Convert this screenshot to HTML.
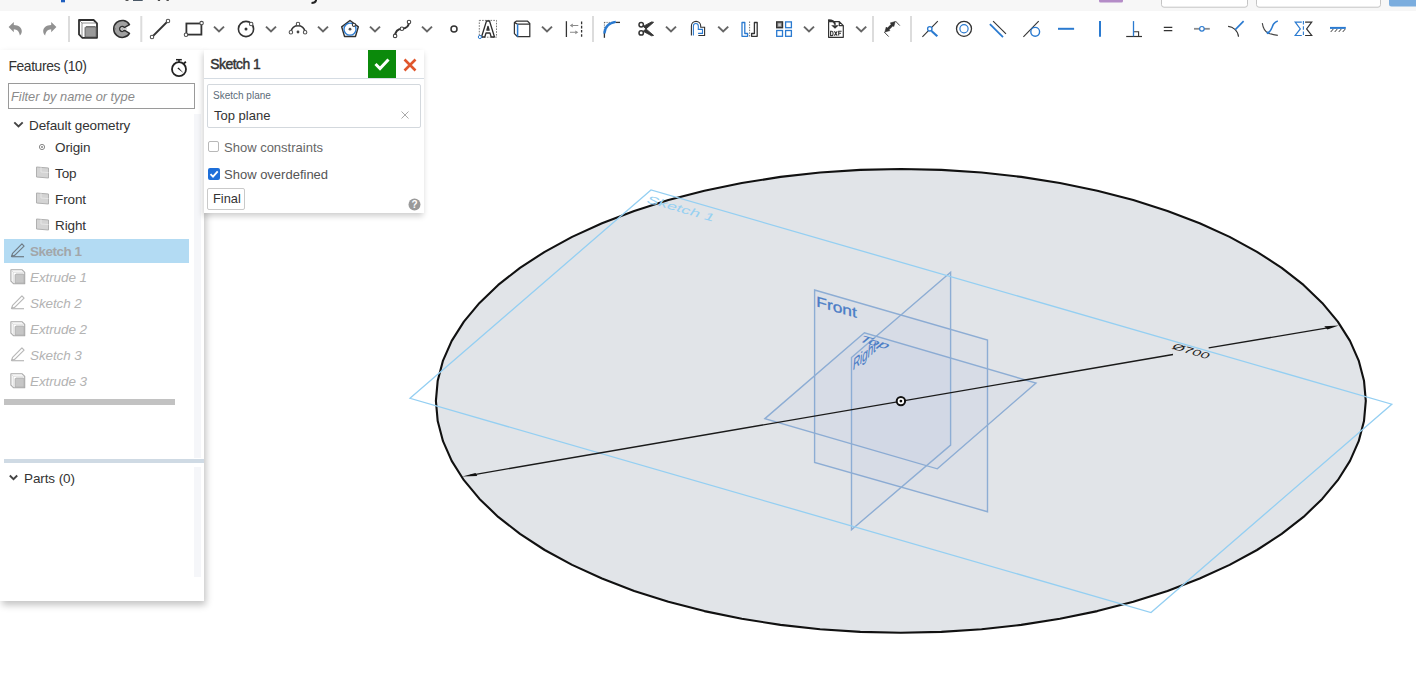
<!DOCTYPE html>
<html><head><meta charset="utf-8">
<style>
*{box-sizing:border-box;margin:0;padding:0}
html,body{width:1416px;height:699px;overflow:hidden;background:#fff;font-family:"Liberation Sans",sans-serif;color:#333}
.abs{position:absolute}
#topstrip{position:absolute;left:0;top:0;width:1416px;height:11px;background:#f5f5f5}
#toolbar{position:absolute;left:0;top:11px;width:1416px;height:37px;background:#fff}
#toolbar svg{position:absolute;top:0;left:0}
#panel{position:absolute;left:0;top:50px;width:204px;height:551px;background:#fff;box-shadow:2px 4px 7px rgba(0,0,0,.24)}
.t{position:absolute;white-space:nowrap;line-height:1}
#dlg{position:absolute;left:204px;top:50px;width:220px;height:163px;background:#fff;box-shadow:-1px 3px 6px rgba(0,0,0,.2)}
</style></head><body>
<div id="topstrip"></div>
<div id="toolbar"></div>
<!--TB--><svg class="abs" style="left:0;top:0" width="1416" height="49" viewBox="0 0 1416 49"><rect x="0" y="0" width="1416" height="10.6" fill="#f7f7f7"/>
<rect x="61" y="-1" width="4" height="3.3" fill="#1f5fbf"/>
<rect x="125.3" y="-1" width="3.4" height="1.8" rx="0.8" fill="#222"/>
<rect x="133" y="-1" width="9.7" height="2" fill="#4a5866"/>
<rect x="157.8" y="-1" width="2.3" height="1.8" fill="#222"/>
<rect x="166.5" y="-1" width="2.3" height="1.8" fill="#222"/>
<path d="M316,-1 L316,0.5 Q315.3,3 311.5,3" stroke="#222" stroke-width="2" fill="none"/>
<rect x="1099" y="-3" width="24" height="5.5" rx="1.5" fill="#b48cc7"/>
<rect x="1161.5" y="-4" width="86" height="11.2" rx="2.5" fill="#fff" stroke="#c4c4c4" stroke-width="1"/>
<rect x="1256.5" y="-4" width="124" height="11.2" rx="2.5" fill="#fff" stroke="#c4c4c4" stroke-width="1"/>
<rect x="1389" y="-4" width="30" height="10.5" rx="2.5" fill="#7badde"/>
<path d="M8.6,27.1 L13.8,21.9 L13.8,25.1 C18.6,25.1 21.8,28 21.8,31.3 C21.8,33.2 20.9,34.6 19.8,35.6 C19.6,32 17.2,29.2 13.8,29.2 L13.8,32.3 Z" fill="#919191"/>
<path d="M8.6,27.1 L13.8,21.9 L13.8,25.1 C18.6,25.1 21.8,28 21.8,31.3 C21.8,33.2 20.9,34.6 19.8,35.6 C19.6,32 17.2,29.2 13.8,29.2 L13.8,32.3 Z" fill="#919191" transform="translate(65,0) scale(-1,1)"/>
<rect x="68" y="16" width="2" height="26" fill="#dcdcdc"/>
<path d="M79,20 L93.6,20 L97,23.4 L97,37.8 L82.4,37.8 L79,34.4 Z" fill="#fff" stroke="#2e2e2e" stroke-width="1.8" stroke-linejoin="round"/>
<path d="M80,21 L82,23 L82,37 M82,23 L96,23" fill="none" stroke="#777" stroke-width="0.8"/>
<path d="M86.2,26.5 L95,26.5 L96.2,27.6 L96.2,37 L85,37 L85,27.7 Z" fill="#9a9a9a" stroke="#555" stroke-width="0.8"/>
<path d="M85,27.7 L86.2,26.5 L95,26.5 L96.2,27.6 Z" fill="#777"/>
<path d="M129.49,24.52 A8.5,8.5 0 1 0 129.49,33.28 L124.34,30.19 A2.5,2.5 0 1 1 124.34,27.61 Z" fill="#a0a0a0" stroke="#2e2e2e" stroke-width="1.5" stroke-linejoin="round"/>
<circle cx="122.4" cy="28.9" r="1.3" fill="#b0b0b0"/>
<rect x="123.4" y="28.099999999999998" width="3.4" height="1.6" fill="#c4c4c4"/>
<path d="M114.6,28.9 L115.8,28.9" stroke="#666" stroke-width="1"/>
<rect x="140.3" y="16" width="2" height="26" fill="#dcdcdc"/>
<line x1="152" y1="37" x2="168" y2="21" stroke="#333" stroke-width="1.8"/>
<circle cx="152" cy="37" r="1.75" fill="#fff" stroke="#505050" stroke-width="1.05"/><circle cx="168" cy="21" r="1.75" fill="#fff" stroke="#505050" stroke-width="1.05"/>
<rect x="186.4" y="23.5" width="15" height="11.1" fill="none" stroke="#333" stroke-width="1.8"/>
<circle cx="201.6" cy="23.1" r="1.75" fill="#fff" stroke="#505050" stroke-width="1.05"/><circle cx="186" cy="34.8" r="1.75" fill="#fff" stroke="#505050" stroke-width="1.05"/>
<polyline points="214,26.6 219,31.4 224,26.6" fill="none" stroke="#666" stroke-width="2"/>
<circle cx="246" cy="29" r="7.6" fill="none" stroke="#333" stroke-width="1.6"/>
<circle cx="246" cy="29" r="1.5" fill="#333"/>
<circle cx="251.2" cy="23.9" r="1.75" fill="#fff" stroke="#505050" stroke-width="1.05"/>
<polyline points="266,26.6 271,31.4 276,26.6" fill="none" stroke="#666" stroke-width="2"/>
<path d="M290.9,32 A7.2,7.6 0 0 1 305.1,32" fill="none" stroke="#333" stroke-width="1.6"/>
<circle cx="298" cy="32" r="1.4" fill="#444"/>
<circle cx="290.9" cy="32.2" r="1.75" fill="#fff" stroke="#505050" stroke-width="1.05"/><circle cx="305.1" cy="32.2" r="1.75" fill="#fff" stroke="#505050" stroke-width="1.05"/><circle cx="298" cy="24" r="1.75" fill="#fff" stroke="#505050" stroke-width="1.05"/>
<polyline points="318,26.6 323,31.4 328,26.6" fill="none" stroke="#666" stroke-width="2"/>
<polygon points="350,20.5 358.3,26.9 355.5,36.4 344.5,36.4 341.7,26.9" fill="none" stroke="#333" stroke-width="1.5" stroke-linejoin="round"/>
<circle cx="350" cy="29.2" r="6" fill="none" stroke="#2a7ad0" stroke-width="1.3"/>
<circle cx="350" cy="29.2" r="1.4" fill="#555"/>
<circle cx="353.9" cy="24.8" r="1.6" fill="#fff" stroke="#333" stroke-width="1.05"/>
<polyline points="370,26.6 375,31.4 380,26.6" fill="none" stroke="#666" stroke-width="2"/>
<path d="M395.1,35.9 C395.3,31 397.8,29.2 401.9,28.8 C406.2,28.4 409,26 409,21.95" fill="none" stroke="#333" stroke-width="1.9"/>
<circle cx="395.1" cy="35.9" r="1.75" fill="#fff" stroke="#444" stroke-width="1.1"/><circle cx="401.9" cy="28.8" r="1.75" fill="#fff" stroke="#444" stroke-width="1.1"/><circle cx="409" cy="21.95" r="1.75" fill="#fff" stroke="#444" stroke-width="1.1"/>
<polyline points="422,26.6 427,31.4 432,26.6" fill="none" stroke="#666" stroke-width="2"/>
<circle cx="454" cy="29" r="3" fill="#fff" stroke="#333" stroke-width="1.5"/>
<rect x="479.3" y="20.4" width="17.2" height="16.8" fill="none" stroke="#555" stroke-width="0.8" stroke-dasharray="1.6,1.2"/>
<path d="M481.5,37 L486.5,21 L489.5,21 L494.5,37 L491.2,37 L490,33 L486,33 L484.8,37 Z M486.9,30.2 L489.1,30.2 L488,26.3 Z" fill="#fff" stroke="#2e2e2e" stroke-width="1.3" stroke-linejoin="round"/>
<circle cx="479.9" cy="37" r="1.6" fill="#fff" stroke="#2a7ad0" stroke-width="1"/>
<path d="M514.4,22.4 L516.2,21.2 L527.6,21.2 L529.8,23.4 L529.8,36.7 L517.6,36.7 L514.4,33.6 Z M517.6,24.2 L529.8,24.2 M514.4,22.4 L517.6,24.2" fill="none" stroke="#333" stroke-width="1.25" stroke-linejoin="round"/>
<line x1="517.6" y1="24.2" x2="517.6" y2="36.7" stroke="#2a7ad0" stroke-width="1.5"/>
<polyline points="542,26.6 547,31.4 552,26.6" fill="none" stroke="#666" stroke-width="2"/>
<line x1="566.4" y1="21.2" x2="566.4" y2="37" stroke="#333" stroke-width="1.3"/>
<line x1="581.6" y1="21.6" x2="581.6" y2="37" stroke="#333" stroke-width="1.3" stroke-dasharray="2.6,1.6"/>
<path d="M572.6,25.5 L578.3,25.5 M570,32.3 L575.6,32.3" fill="none" stroke="#8a8a8a" stroke-width="1.1"/>
<path d="M569.8,25.5 L572.8,23.6 L572.8,27.4 Z M578.3,32.3 L575.3,30.4 L575.3,34.2 Z" fill="#8a8a8a"/>
<rect x="592" y="16" width="2" height="26" fill="#dcdcdc"/>
<path d="M604.4,22.4 L604.4,33 M604.4,22.4 L615.5,22.4" fill="none" stroke="#333" stroke-width="0.9" stroke-dasharray="0.9,1.3"/>
<line x1="604.4" y1="33" x2="604.4" y2="37.8" stroke="#333" stroke-width="1.3"/>
<line x1="615.5" y1="22.4" x2="620" y2="22.4" stroke="#333" stroke-width="1.3"/>
<path d="M604.4,33.5 C604.8,27 609,22.8 615.8,21.9" fill="none" stroke="#2a7ad0" stroke-width="2.4"/>
<circle cx="641.2" cy="24.8" r="2.2" fill="none" stroke="#333" stroke-width="1.5"/>
<circle cx="641.2" cy="32.9" r="2.2" fill="none" stroke="#333" stroke-width="1.5"/>
<path d="M643.2,26.4 L646,28.9 L653.6,22.3 L651.6,21.9 Z M643.2,31.3 L646,28.9 L653.6,35.4 L651.6,35.8 Z" fill="#333" stroke="#333" stroke-width="0.9" stroke-linejoin="round"/>
<polyline points="666,26.6 671,31.4 676,26.6" fill="none" stroke="#666" stroke-width="2"/>
<path d="M691.4,35.5 L691.4,26 A4.65,4.65 0 0 1 700.7,26 L700.7,27.2 L704.6,27.2 L704.6,35.5 L698.3,35.5" fill="none" stroke="#333" stroke-width="1.1"/>
<path d="M693.4,35.5 L693.4,26 A2.45,2.45 0 0 1 698.3,26 L698.3,29.4 L702.5,29.4 L702.5,33.4 L698.1,33.4" fill="none" stroke="#2a7ad0" stroke-width="1.1"/>
<polyline points="718.2,26.6 723.2,31.4 728.2,26.6" fill="none" stroke="#666" stroke-width="2"/>
<path d="M742,22.5 L744.8,22.5 L744.8,33.5 L747.6,33.5 L747.6,36.3 L742,36.3 Z" fill="none" stroke="#2a7ad0" stroke-width="1.3" stroke-linejoin="round"/>
<path d="M757.2,22.5 L754.4,22.5 L754.4,33.5 L751.6,33.5 L751.6,36.3 L757.2,36.3 Z" fill="none" stroke="#333" stroke-width="1.3" stroke-linejoin="round"/>
<line x1="749.6" y1="21.5" x2="749.6" y2="37" stroke="#555" stroke-width="0.8" stroke-dasharray="1.5,1.2"/>
<rect x="776.7" y="21.9" width="5.8" height="5.8" fill="#888" stroke="#333" stroke-width="1.4"/>
<rect x="778.3" y="23.5" width="2.6" height="2.6" fill="#ccc"/>
<rect x="785.6" y="21.9" width="5.8" height="5.8" fill="none" stroke="#2a7ad0" stroke-width="1.3"/>
<rect x="776.7" y="30.5" width="5.8" height="5.8" fill="none" stroke="#2a7ad0" stroke-width="1.3"/>
<rect x="785.6" y="30.5" width="5.8" height="5.8" fill="none" stroke="#2a7ad0" stroke-width="1.3"/>
<polyline points="804,26.6 809,31.4 814,26.6" fill="none" stroke="#666" stroke-width="2"/>
<path d="M828.6,21.6 L839.3,21.6 L843.3,25.6 L843.3,37.3 L828.6,37.3 Z M839.3,21.6 L839.3,25.6 L843.3,25.6" fill="#fff" stroke="#333" stroke-width="1.2" stroke-linejoin="round"/>
<path d="M828,20.4 C831.5,20.2 835,21 835,24.8" fill="none" stroke="#333" stroke-width="2"/>
<path d="M831.2,25.2 L838.8,25.2 L835,28.8 Z" fill="#333"/>
<path d="M830.6,31.2 L830.6,35.6 L831.8,35.6 Q833.1,35.6 833.1,33.4 Q833.1,31.2 831.8,31.2 Z M834.4,31.2 L837.2,35.6 M837.2,31.2 L834.4,35.6 M841.6,31.2 L838.7,31.2 L838.7,35.6 M838.7,33.3 L841,33.3" fill="none" stroke="#333" stroke-width="1.1"/>
<polyline points="856.2,26.6 861.2,31.4 866.2,26.6" fill="none" stroke="#666" stroke-width="2"/>
<rect x="872" y="16" width="2" height="26" fill="#dcdcdc"/>
<path d="M887.6,29.4 L892.6,24.4" stroke="#333" stroke-width="2.8"/>
<path d="M895.2,21.6 L890.2,23.0 L893.8,26.6 Z M884.9,32.0 L886.3,27.0 L889.9,30.6 Z" fill="#333" stroke="#333" stroke-width="0.6" stroke-linejoin="round"/>
<path d="M895.4,21 L899.8,25.6 M884.2,32 L888.7,36.6" stroke="#333" stroke-width="0.9"/>
<rect x="910" y="16" width="2" height="26" fill="#dcdcdc"/>
<line x1="922.4" y1="36.8" x2="937.8" y2="21.1" stroke="#333" stroke-width="1.1"/>
<line x1="931.5" y1="31" x2="937.3" y2="36.3" stroke="#2a7ad0" stroke-width="2.2"/>
<circle cx="929.8" cy="28.8" r="2.2" fill="#fff" stroke="#2a7ad0" stroke-width="1.3"/>
<circle cx="964" cy="28.8" r="7.5" fill="none" stroke="#333" stroke-width="1.3"/>
<circle cx="964" cy="28.8" r="4.1" fill="none" stroke="#2a7ad0" stroke-width="1.2"/>
<line x1="993.1" y1="21.1" x2="1006" y2="33.8" stroke="#333" stroke-width="1.1"/>
<line x1="989.9" y1="24.2" x2="1003" y2="37.2" stroke="#2a7ad0" stroke-width="1.8"/>
<line x1="1023.4" y1="36.8" x2="1038.7" y2="21.1" stroke="#333" stroke-width="1.1"/>
<circle cx="1035.2" cy="31.8" r="4.4" fill="none" stroke="#2a7ad0" stroke-width="1.4"/>
<line x1="1058" y1="28.8" x2="1074.1" y2="28.8" stroke="#2a7ad0" stroke-width="2"/>
<line x1="1100" y1="20.9" x2="1100" y2="36.8" stroke="#2a7ad0" stroke-width="2"/>
<path d="M1133.6,31.7 L1138.6,31.7 L1138.6,36.5" fill="none" stroke="#333" stroke-width="1.1"/>
<line x1="1126.2" y1="36.5" x2="1142" y2="36.5" stroke="#333" stroke-width="1.2"/>
<line x1="1133.5" y1="21.1" x2="1133.5" y2="36.3" stroke="#2a7ad0" stroke-width="1.3"/>
<path d="M1163.8,27.4 L1172.3,27.4 M1163.8,30.6 L1172.3,30.6" stroke="#333" stroke-width="1.3"/>
<line x1="1194" y1="28.8" x2="1209.8" y2="28.8" stroke="#8c8c8c" stroke-width="1.8"/>
<circle cx="1201.9" cy="28.8" r="2.3" fill="#fff" stroke="#2a7ad0" stroke-width="1.2"/>
<path d="M1228.1,26.4 C1233,26.8 1238,30.5 1238.5,36.8" fill="none" stroke="#333" stroke-width="1.1"/>
<line x1="1235.3" y1="29.6" x2="1243.6" y2="21.1" stroke="#2a7ad0" stroke-width="1.6"/>
<path d="M1262.3,23.2 C1263,28 1265,31.5 1268,32.9 C1271,34.3 1275,35 1277.8,35.4" fill="none" stroke="#444" stroke-width="1.1"/>
<path d="M1268.2,32.8 C1271.8,30.8 1271.8,26.5 1273.6,24 C1274.8,22.4 1276.2,21.5 1277.8,21.1" fill="none" stroke="#2a7ad0" stroke-width="1.5"/>
<circle cx="1267.9" cy="32.8" r="1.4" fill="#2a7ad0"/>
<path d="M1301.8,22.2 L1295.2,22.2 L1300.3,28.9 L1295.2,35.5 L1301.8,35.5" fill="none" stroke="#2a7ad0" stroke-width="1.2"/>
<path d="M1305.1,22.2 L1311.7,22.2 L1306.6,28.9 L1311.7,35.5 L1305.1,35.5" fill="none" stroke="#333" stroke-width="1.2"/>
<line x1="1303.4" y1="21.1" x2="1303.4" y2="36.6" stroke="#2a7ad0" stroke-width="1.1" stroke-dasharray="3.4,1.8"/>
<line x1="1330" y1="27.9" x2="1345.8" y2="27.9" stroke="#2a7ad0" stroke-width="2"/>
<path d="M1330.8,31.9 L1333.2,29.1 M1334.8,31.9 L1337.2,29.1 M1338.8,31.9 L1341.2,29.1 M1342.8,31.9 L1345.2,29.1" stroke="#333" stroke-width="1"/></svg><!--/TB-->

<svg class="abs" style="left:0;top:0" width="1416" height="699" viewBox="0 0 1416 699">
  <polygon points="1365.8,400.9 1364.0,380.7 1358.7,360.6 1350.0,340.9 1337.8,321.6 1322.2,302.9 1303.5,284.9 1281.7,267.9 1257.0,251.8 1229.6,236.9 1199.7,223.3 1167.5,210.9 1133.3,200.1 1097.3,190.7 1059.9,183.0 1021.2,176.9 981.6,172.5 941.4,169.9 900.9,169.0 860.3,169.9 820.1,172.5 780.5,176.9 741.8,183.0 704.4,190.7 668.4,200.1 634.2,210.9 602.0,223.3 572.1,236.9 544.7,251.8 520.0,267.9 498.2,284.9 479.5,302.9 463.9,321.6 451.7,340.9 443.0,360.6 437.7,380.7 435.9,400.9 437.7,421.1 443.0,441.2 451.7,460.9 463.9,480.2 479.5,498.9 498.2,516.9 520.0,533.9 544.7,550.0 572.1,564.9 602.0,578.5 634.2,590.9 668.4,601.7 704.4,611.1 741.8,618.8 780.5,624.9 820.1,629.3 860.3,631.9 900.8,632.8 941.4,631.9 981.6,629.3 1021.2,624.9 1059.9,618.8 1097.3,611.1 1133.3,601.7 1167.5,590.9 1199.7,578.5 1229.6,564.9 1257.0,550.0 1281.7,533.9 1303.5,516.9 1322.2,498.9 1337.8,480.2 1350.0,460.9 1358.7,441.2 1364.0,421.1" fill="#e1e4e8" stroke="#111" stroke-width="2.1" stroke-linejoin="round"/>
  <g fill="rgba(110,150,210,0.045)" stroke="#8dadd4" stroke-width="1.4">
    <polygon points="814.6,290 987.5,340.1 987.5,511.7 814.6,462.4"/>
    <polygon points="764.9,418.6 864.4,332.8 1036,383 937.3,468.8"/>
    <polygon points="851.5,357.5 950.6,272.3 950.6,445.1 851.5,529.8"/>
  </g>
  <g fill="#4a7cc6" stroke="#4a7cc6" stroke-width="0.3" font-family="Liberation Sans" font-size="14.5">
    <text transform="matrix(1.196,0.3457,0,1,816.3,306.2)">Front</text>
    <text font-size="13" stroke-width="0.15" transform="matrix(0.765,-0.644,-0.12,1.32,852.4,370.8)">Right</text>
    <text font-size="12" stroke-width="0.12" transform="matrix(1.485,0.429,-0.7567,0.654,857.5,340.9)">Top</text>
  </g>
  <polygon points="410,398.3 651,190 1391.8,404.2 1151,612.5" fill="none" stroke="#94cff2" stroke-width="1.3"/>
  <text fill="#96d0f2" font-family="Liberation Sans" font-size="12" transform="matrix(1.43,0.415,-0.51,0.79,645.5,202.2)">Sketch 1</text>
  <g stroke="#1a1a1a" stroke-width="1.3" fill="none">
    <line x1="470" y1="475.3" x2="1173" y2="354.5"/>
    <line x1="1208.7" y1="347.9" x2="1332" y2="327.1"/>
  </g>
  <polygon points="462.3,476.5 475.5,473 477.3,476.1" fill="#111"/>
  <polygon points="1338.8,325.5 1324.3,326.2 1327.4,329.4" fill="#111"/>
  <text fill="#222" font-family="Liberation Sans" font-size="12" transform="matrix(1.24,0.36,-0.49,0.65,1171,348.5)">Ø700</text>
  <circle cx="900.9" cy="401.1" r="4.2" fill="#fff" stroke="#111" stroke-width="2"/>
  <circle cx="900.9" cy="401.1" r="1.4" fill="#111"/>
</svg>

<div id="panel">
  <div class="abs" style="left:4px;top:189px;width:185px;height:24px;background:#b3dbf3"></div>
  <div class="t" style="left:8.4px;top:9.6px;font-size:13.9px;letter-spacing:-0.4px;color:#333">Features (10)</div>
  <svg class="abs" style="left:169px;top:8px" width="20" height="20" viewBox="0 0 20 20">
    <circle cx="10" cy="11.2" r="7" fill="none" stroke="#222" stroke-width="1.8"/>
    <line x1="7" y1="1.7" x2="12.8" y2="1.7" stroke="#222" stroke-width="1.5"/>
    <line x1="10" y1="1.7" x2="10" y2="4.2" stroke="#222" stroke-width="1.6"/>
    <line x1="14.8" y1="5.5" x2="16.9" y2="3.8" stroke="#222" stroke-width="1.8"/>
    <path d="M8.4,10.4 L9.6,9.4 L14.5,15.1 Z" fill="#222"/>
  </svg>
  <div class="abs" style="left:8px;top:33px;width:187px;height:26px;border:1px solid #9a9a9a;background:#fff"></div>
  <div class="t" style="left:11px;top:41px;font-size:12.8px;font-style:italic;color:#8a8a8a">Filter by name or type</div>
  <svg class="abs" style="left:12px;top:69px" width="14" height="12" viewBox="0 0 14 12"><polyline points="2.3,3.3 6.5,7.5 10.7,3.3" fill="none" stroke="#444" stroke-width="1.9"/></svg>
  <div class="t" style="left:29px;top:68.5px;font-size:13.5px;letter-spacing:-0.1px;color:#333">Default geometry</div>
  <svg class="abs" style="left:38px;top:93px" width="8" height="8" viewBox="0 0 8 8"><circle cx="4" cy="4" r="2.6" fill="#fff" stroke="#888" stroke-width="1"/><circle cx="4" cy="4" r="1" fill="#888"/></svg>
  <div class="t" style="left:55px;top:90.5px;font-size:13.5px;letter-spacing:-0.1px;color:#333">Origin</div>
  <svg class="abs" style="left:35px;top:116px" width="15" height="13" viewBox="0 0 15 13"><path d="M1.5,1 L13.5,2 L13.5,12 L1.5,11 Z" fill="#d4d4d4" stroke="#b0b0b0" stroke-width="1"/><path d="M6,1.4 L6,6 L13.5,6.6" fill="none" stroke="#e6e6e6" stroke-width="1"/></svg><svg class="abs" style="left:35px;top:142px" width="15" height="13" viewBox="0 0 15 13"><path d="M1.5,1 L13.5,2 L13.5,12 L1.5,11 Z" fill="#d4d4d4" stroke="#b0b0b0" stroke-width="1"/><path d="M6,1.4 L6,6 L13.5,6.6" fill="none" stroke="#e6e6e6" stroke-width="1"/></svg><svg class="abs" style="left:35px;top:168px" width="15" height="13" viewBox="0 0 15 13"><path d="M1.5,1 L13.5,2 L13.5,12 L1.5,11 Z" fill="#d4d4d4" stroke="#b0b0b0" stroke-width="1"/><path d="M6,1.4 L6,6 L13.5,6.6" fill="none" stroke="#e6e6e6" stroke-width="1"/></svg><svg class="abs" style="left:10px;top:193px" width="16" height="15" viewBox="0 0 16 15"><path d="M1.5,13.5 L2.56,10.32 L11.94,0.94 L14.06,3.06 L4.68,12.44 Z" fill="none" stroke="#6f7b85" stroke-width="1.2" stroke-linejoin="round"/><path d="M1.5,13.5 L2.2,11.4 L3.6,12.8 Z" fill="#6f7b85"/><line x1="1.5" y1="13.7" x2="14" y2="13.7" stroke="#6f7b85" stroke-width="1.2"/></svg><svg class="abs" style="left:10px;top:219px" width="16" height="16" viewBox="0 0 16 16"><path d="M0.9,0.8 L12.2,0.8 L14.7,3.3 L14.7,14.7 L3.4,14.7 L0.9,12.2 Z" fill="#fff" stroke="#a8a8a8" stroke-width="1.1" stroke-linejoin="round"/><path d="M1.6,1.5 L3.2,3.2 L3.2,14 M3.2,3.2 L14,3.2" fill="none" stroke="#d4d4d4" stroke-width="0.8"/><path d="M5.9,5 L13.6,5 L14.2,5.6 L14.2,14.2 L5.1,14.2 L5.1,5.8 Z" fill="#c6c6c6" stroke="#a8a8a8" stroke-width="0.8"/></svg><svg class="abs" style="left:10px;top:245px" width="16" height="15" viewBox="0 0 16 15"><path d="M1.5,13.5 L2.56,10.32 L11.94,0.94 L14.06,3.06 L4.68,12.44 Z" fill="none" stroke="#b8b8b8" stroke-width="1.2" stroke-linejoin="round"/><path d="M1.5,13.5 L2.2,11.4 L3.6,12.8 Z" fill="#b8b8b8"/><line x1="1.5" y1="13.7" x2="14" y2="13.7" stroke="#b8b8b8" stroke-width="1.2"/></svg><svg class="abs" style="left:10px;top:271px" width="16" height="16" viewBox="0 0 16 16"><path d="M0.9,0.8 L12.2,0.8 L14.7,3.3 L14.7,14.7 L3.4,14.7 L0.9,12.2 Z" fill="#fff" stroke="#a8a8a8" stroke-width="1.1" stroke-linejoin="round"/><path d="M1.6,1.5 L3.2,3.2 L3.2,14 M3.2,3.2 L14,3.2" fill="none" stroke="#d4d4d4" stroke-width="0.8"/><path d="M5.9,5 L13.6,5 L14.2,5.6 L14.2,14.2 L5.1,14.2 L5.1,5.8 Z" fill="#c6c6c6" stroke="#a8a8a8" stroke-width="0.8"/></svg><svg class="abs" style="left:10px;top:297px" width="16" height="15" viewBox="0 0 16 15"><path d="M1.5,13.5 L2.56,10.32 L11.94,0.94 L14.06,3.06 L4.68,12.44 Z" fill="none" stroke="#b8b8b8" stroke-width="1.2" stroke-linejoin="round"/><path d="M1.5,13.5 L2.2,11.4 L3.6,12.8 Z" fill="#b8b8b8"/><line x1="1.5" y1="13.7" x2="14" y2="13.7" stroke="#b8b8b8" stroke-width="1.2"/></svg><svg class="abs" style="left:10px;top:323px" width="16" height="16" viewBox="0 0 16 16"><path d="M0.9,0.8 L12.2,0.8 L14.7,3.3 L14.7,14.7 L3.4,14.7 L0.9,12.2 Z" fill="#fff" stroke="#a8a8a8" stroke-width="1.1" stroke-linejoin="round"/><path d="M1.6,1.5 L3.2,3.2 L3.2,14 M3.2,3.2 L14,3.2" fill="none" stroke="#d4d4d4" stroke-width="0.8"/><path d="M5.9,5 L13.6,5 L14.2,5.6 L14.2,14.2 L5.1,14.2 L5.1,5.8 Z" fill="#c6c6c6" stroke="#a8a8a8" stroke-width="0.8"/></svg>
  <div class="t" style="left:55px;top:116.5px;font-size:13.5px;letter-spacing:-0.1px;color:#333">Top</div>
  <div class="t" style="left:55px;top:142.5px;font-size:13.5px;letter-spacing:-0.1px;color:#333">Front</div>
  <div class="t" style="left:55px;top:168.5px;font-size:13.5px;letter-spacing:-0.1px;color:#333">Right</div>
  <div class="t" style="left:30px;top:194.5px;font-size:13.5px;letter-spacing:-0.5px;font-weight:bold;color:#a2a6aa">Sketch 1</div>
  <div class="t" style="left:30px;top:220.5px;font-size:13.5px;letter-spacing:-0.1px;font-style:italic;color:#b3b3b3">Extrude 1</div>
  <div class="t" style="left:30px;top:246.5px;font-size:13.5px;letter-spacing:-0.1px;font-style:italic;color:#b3b3b3">Sketch 2</div>
  <div class="t" style="left:30px;top:272.5px;font-size:13.5px;letter-spacing:-0.1px;font-style:italic;color:#b3b3b3">Extrude 2</div>
  <div class="t" style="left:30px;top:298.5px;font-size:13.5px;letter-spacing:-0.1px;font-style:italic;color:#b3b3b3">Sketch 3</div>
  <div class="t" style="left:30px;top:324.5px;font-size:13.5px;letter-spacing:-0.1px;font-style:italic;color:#b3b3b3">Extrude 3</div>
  <div class="abs" style="left:4px;top:349px;width:171px;height:6px;background:#c2c2c2"></div>
  <div class="abs" style="left:194px;top:64px;width:7px;height:344px;background:#f5f6f9"></div>
  <div class="abs" style="left:4px;top:409px;width:200px;height:4px;background:#cfdae4"></div>
  <div class="abs" style="left:194px;top:417px;width:7px;height:110px;background:#f5f6f9"></div>
  <svg class="abs" style="left:8px;top:422px" width="12" height="12" viewBox="0 0 12 12"><polyline points="1.8,3.5 5.5,7.2 9.2,3.5" fill="none" stroke="#444" stroke-width="1.9"/></svg>
  <div class="t" style="left:24px;top:421.5px;font-size:13.5px;letter-spacing:-0.1px;color:#333">Parts (0)</div>
</div>

<div id="dlg">
  <div class="t" style="left:6.3px;top:8.3px;font-size:13.9px;color:#333;-webkit-text-stroke:0.45px #333;letter-spacing:-0.5px">Sketch 1</div>
  <div class="abs" style="left:164px;top:0;width:28px;height:28px;background:#0b8a0b"></div>
  <svg class="abs" style="left:164px;top:0" width="28" height="28" viewBox="0 0 28 28"><polyline points="7.5,14 12,18.5 20.5,9.5" fill="none" stroke="#fff" stroke-width="3"/></svg>
  <svg class="abs" style="left:198px;top:7px" width="16" height="16" viewBox="0 0 16 16"><path d="M2.5,2.5 L13.5,13.5 M13.5,2.5 L2.5,13.5" stroke="#e0562c" stroke-width="2.6"/></svg>
  <div class="abs" style="left:0;top:28px;width:220px;height:1px;background:#d5dce3"></div>
  <div class="abs" style="left:3px;top:34px;width:214px;height:44px;border:1px solid #d3d8dd;border-radius:2px"></div>
  <div class="t" style="left:9px;top:41px;font-size:10px;color:#5c6b78">Sketch plane</div>
  <div class="t" style="left:10px;top:59px;font-size:13px;color:#333">Top plane</div>
  <svg class="abs" style="left:196px;top:60px" width="10" height="10" viewBox="0 0 10 10"><path d="M1.5,1.5 L8.5,8.5 M8.5,1.5 L1.5,8.5" stroke="#aaa" stroke-width="1"/></svg>
  <div class="abs" style="left:4px;top:91px;width:11px;height:11px;border:1px solid #b8b8b8;border-radius:2px;background:#fff"></div>
  <div class="t" style="left:20px;top:91px;font-size:13px;color:#666">Show constraints</div>
  <svg class="abs" style="left:4px;top:118px" width="12" height="12" viewBox="0 0 12 12"><rect x="0" y="0" width="12" height="12" rx="2" fill="#1e6fd9"/><polyline points="2.5,6.2 5,8.7 9.7,3.3" fill="none" stroke="#fff" stroke-width="1.8"/></svg>
  <div class="t" style="left:20px;top:118px;font-size:13px;color:#555">Show overdefined</div>
  <div class="abs" style="left:3px;top:138px;width:38px;height:22px;border:1px solid #c9c9c9;border-radius:2px;background:#fff"></div>
  <div class="t" style="left:9px;top:143px;font-size:12.8px;color:#333">Final</div>
  <svg class="abs" style="left:204px;top:148px" width="13" height="13" viewBox="0 0 13 13"><circle cx="6.5" cy="6.5" r="6" fill="#9a9a9a"/><text x="6.5" y="10.3" text-anchor="middle" font-family="Liberation Sans" font-weight="bold" font-size="10" fill="#fff">?</text></svg>
</div>
</body></html>
